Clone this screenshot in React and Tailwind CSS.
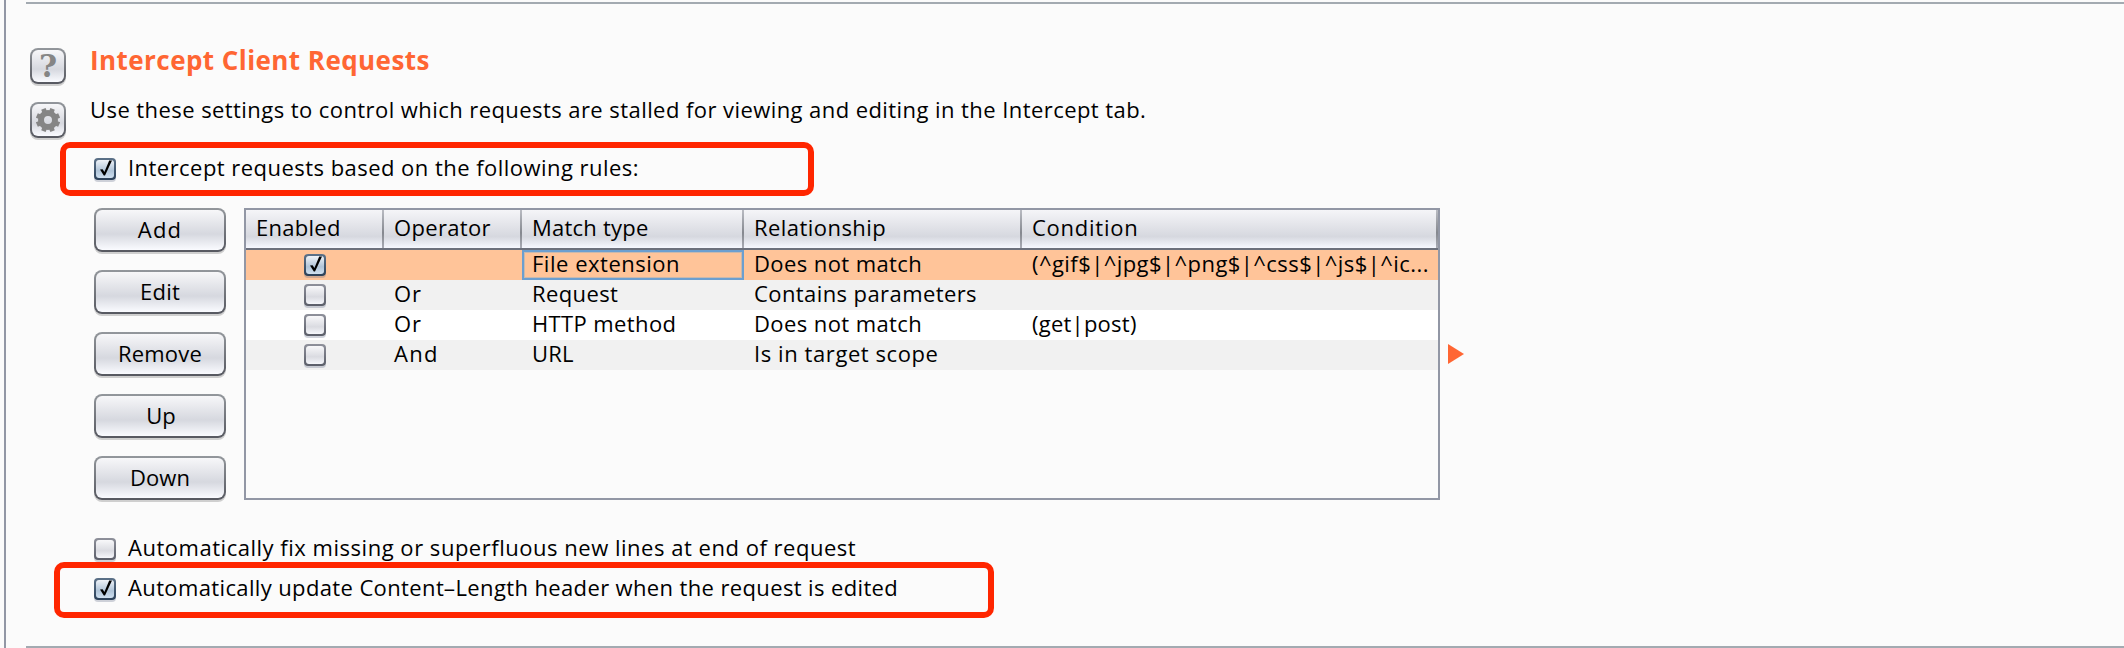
const FACE = "bg-linear-to-b from-[#f7f7f9] via-[#d6d8df] via-60% to-[#fafbff]";
const RIM = "bg-linear-to-b from-[#93979c] to-[#565860]";

const COLUMNS = [
  { label: "Enabled", width: "w-[138px]", tracking: "tracking-[0.28px]" },
  { label: "Operator", width: "w-[138px]", tracking: "tracking-[0.33px]" },
  { label: "Match type", width: "w-[222px]", tracking: "tracking-[0.23px]" },
  { label: "Relationship", width: "w-[278px]", tracking: "tracking-[0.45px]" },
  { label: "Condition", width: "w-[416px]", tracking: "tracking-[0.75px]" },
];

const RULES = [
  {
    enabled: true,
    bg: "bg-[#ffc499]",
    cells: [
      ["", ""],
      ["File extension", "tracking-[0.52px]"],
      ["Does not match", "tracking-[0.4px]"],
      ["(^gif$|^jpg$|^png$|^css$|^js$|^ic...", "tracking-[0.44px]"],
    ],
  },
  {
    enabled: false,
    bg: "bg-[#f1f1f1]",
    cells: [
      ["Or", "tracking-[0.89px]"],
      ["Request", "tracking-[0.4px]"],
      ["Contains parameters", "tracking-[0.41px]"],
      ["", ""],
    ],
  },
  {
    enabled: false,
    bg: "bg-white",
    cells: [
      ["Or", "tracking-[0.89px]"],
      ["HTTP method", "tracking-[0.38px]"],
      ["Does not match", "tracking-[0.4px]"],
      ["(get|post)", "tracking-[0.24px]"],
    ],
  },
  {
    enabled: false,
    bg: "bg-[#f1f1f1]",
    cells: [
      ["And", "tracking-[1.3px]"],
      ["URL", "tracking-[0.19px]"],
      ["Is in target scope", "tracking-[0.58px]"],
      ["", ""],
    ],
  },
];

const ACTIONS = [
  ["Add", "tracking-[1.2px]"],
  ["Edit", "tracking-[0.25px]"],
  ["Remove", "tracking-[0.2px]"],
  ["Up", "tracking-normal pl-[2px]"],
  ["Down", "tracking-[0.08px]"],
];

function IconButton({ label, children }) {
  return (
    <button
      aria-label={label}
      className={`block size-9 rounded-[8px] p-[2px] shadow-[0_2px_0_#cfcfcf] ${RIM}`}
    >
      <span className={`flex size-8 items-center justify-center rounded-[6px] ${FACE}`}>
        {children}
      </span>
    </button>
  );
}

function ActionButton({ label, tracking }) {
  return (
    <button className={`block h-11 w-[132px] rounded-[8px] p-[2px] shadow-[0_2px_0_#cfcfcf] ${RIM}`}>
      <span className={`flex h-10 items-center justify-center rounded-[6px] pb-[2px] ${FACE} ${tracking}`}>
        {label}
      </span>
    </button>
  );
}

function Checkbox({ checked }) {
  const rim = checked
    ? "bg-linear-to-b from-[#5d7289] to-[#2b4058]"
    : "bg-linear-to-b from-[#8f919b] to-[#5b5e69]";
  const face = checked
    ? "bg-linear-to-b from-[#eff3f8] via-[#b0c4d8] via-60% to-[#cfe0f0]"
    : "bg-linear-to-b from-[#f8f8fa] via-[#dadbe1] via-60% to-[#f6f7fb]";
  return (
    <span
      role="checkbox"
      aria-checked={checked}
      className={`block size-[22px] shrink-0 rounded-[4px] p-[2px] shadow-[0_2px_0_rgba(90,100,130,0.28)] ${rim}`}
    >
      <span className={`block size-[18px] rounded-[3px] ${face}`}>
        {checked && (
          <svg viewBox="0 0 18 18" className="block size-[18px]">
            <path d="M4 9.6 L6.6 9.2 L8.4 12 L13.2 0.4 L16 0.4 L9 15.6 L7.8 15.6 Z" fill="#000" />
          </svg>
        )}
      </span>
    </span>
  );
}

function GearIcon() {
  return (
    <svg viewBox="0 0 24 24" className="size-6">
      <circle cx="12" cy="12" r="7" fill="none" stroke="#858585" strokeWidth="6" />
      <g fill="#858585">
        {[22.5, 67.5, 112.5, 157.5, 202.5, 247.5, 292.5, 337.5].map((angle) => (
          <rect key={angle} x="9.6" y="0" width="4.8" height="4" transform={`rotate(${angle} 12 12)`} />
        ))}
      </g>
    </svg>
  );
}

function Option({ checked, tracking, children }) {
  return (
    <div className="ml-1 flex h-[26px] items-start gap-3">
      <div className="pt-1">
        <Checkbox checked={checked} />
      </div>
      <span className={tracking}>{children}</span>
    </div>
  );
}

function RulesTable() {
  return (
    <div className="h-[292px] w-[1196px] border-2 border-[#9297a5]">
      <div className="flex h-10 border-b-2 border-[#6c707c] bg-linear-to-b from-[#f5f5f8] via-[#d6d8df] via-70% to-[#f6f8ff]">
        {COLUMNS.map((column) => (
          <div key={column.label} className={`flex h-[38px] ${column.width}`}>
            <span className={`flex-1 pt-1 pl-[10px] ${column.tracking}`}>{column.label}</span>
            <span className="h-full w-[2px] bg-linear-to-b from-[#b9bbc2] via-[#85888f] via-60% to-[#a9abb4]" />
          </div>
        ))}
      </div>
      {RULES.map((rule, row) => (
        <div key={row} className={`flex h-[30px] ${rule.bg}`}>
          <div className="flex w-[138px] justify-center pt-1">
            <Checkbox checked={rule.enabled} />
          </div>
          {rule.cells.map(([text, tracking], i) => (
            <div
              key={i}
              className={`h-[30px] pl-[10px] whitespace-nowrap ${COLUMNS[i + 1].width} ${tracking} ${
                row === 0 && i === 1 ? "shadow-[inset_0_0_0_2px_#6c9fd0,inset_0_0_0_3px_#c9b9ae]" : ""
              }`}
            >
              {text}
            </div>
          ))}
        </div>
      ))}
    </div>
  );
}

export default function App() {
  return (
    <div className="relative h-[648px] w-[2124px] overflow-hidden bg-[#fbfbfb] pl-1 font-['Open_Sans',sans-serif] text-[22px] leading-[26px] text-black">
      <div className="flex h-full flex-col border-l-2 border-[#9297a5] pt-[2px]">
        <div className="ml-5 h-[2px] shrink-0 bg-[#a3aab1]" />
        <div className="flex flex-1 pl-6">
          <div className="flex flex-col gap-[18px] pt-11">
            <IconButton label="Help">
              <span className="font-['DejaVu_Serif',serif] text-[31px] leading-8 font-bold text-[#858585]">?</span>
            </IconButton>
            <IconButton label="Options">
              <GearIcon />
            </IconButton>
          </div>
          <div className="ml-6 pt-[38px]">
            <h2 className="text-[26px] leading-9 font-bold tracking-[0.44px] text-[#ff6633]">
              Intercept Client Requests
            </h2>
            <p className="mt-[18px] tracking-[0.43px]">
              Use these settings to control which requests are stalled for viewing and editing in the Intercept tab.
            </p>
            <div className="mt-8">
              <Option checked tracking="tracking-[0.46px]">
                Intercept requests based on the following rules:
              </Option>
            </div>
            <div className="mt-7 ml-1 flex">
              <div className="flex flex-col gap-[18px]">
                {ACTIONS.map(([label, tracking]) => (
                  <ActionButton key={label} label={label} tracking={tracking} />
                ))}
              </div>
              <div className="ml-[18px]">
                <RulesTable />
              </div>
              <svg viewBox="0 0 16 20" className="mt-[136px] ml-2 h-5 w-4">
                <path d="M0 0 L16 10 L0 20 Z" fill="#ff6633" />
              </svg>
            </div>
            <div className="mt-[34px] flex flex-col gap-[14px]">
              <Option checked={false} tracking="tracking-[0.52px]">
                Automatically fix missing or superfluous new lines at end of request
              </Option>
              <Option checked tracking="tracking-[0.37px]">
                Automatically update Content
                <span className="inline-block w-[11.4px] scale-x-[1.8] text-center">-</span>
                Length header when the request is edited
              </Option>
            </div>
          </div>
        </div>
        <div className="ml-5 h-[2px] shrink-0 bg-[#a3aab1]" />
      </div>
      <div className="absolute top-[142px] left-[60px] h-[54px] w-[754px] rounded-[10px] border-6 border-[#ff2600]" />
      <div className="absolute top-[562px] left-[54px] h-14 w-[940px] rounded-[10px] border-6 border-[#ff2600]" />
    </div>
  );
}
